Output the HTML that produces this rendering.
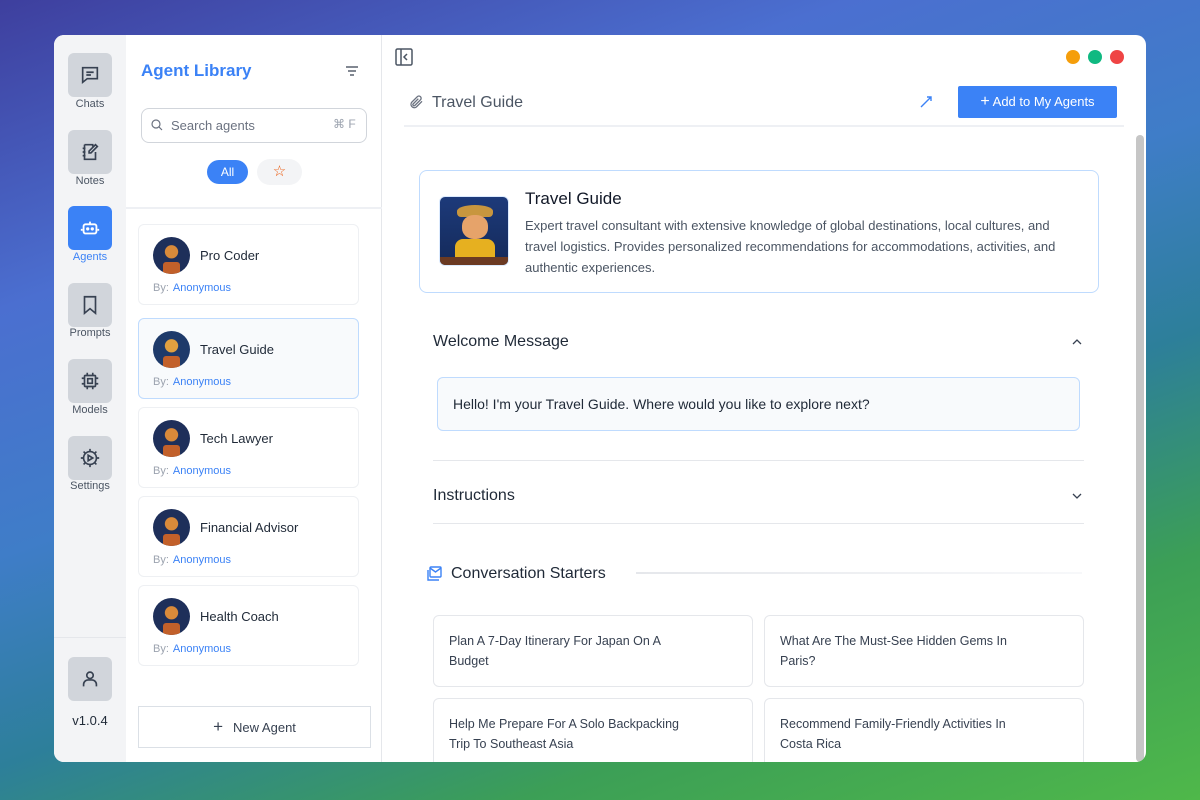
<!DOCTYPE html>
<html><head><meta charset="utf-8"><style>
*{box-sizing:border-box;margin:0;padding:0}
body{width:1200px;height:800px;overflow:hidden;font-family:"Liberation Sans",sans-serif;position:relative;
background:linear-gradient(160deg,#3e3f9e 0%,#4b6fd0 25%,#3f7dc8 45%,#2d7f9a 62%,#3c9f56 80%,#4fb84a 100%)}
.win{position:absolute;left:54px;top:35px;width:1092px;height:727px;background:#fff;border-radius:10px;overflow:hidden}
.rail{position:absolute;left:0;top:0;width:72px;height:727px;background:#f3f4f6}
.rb{position:absolute;left:14px;width:44px;height:44px;border-radius:6px;background:#d1d5db;display:flex;align-items:center;justify-content:center}
.rb.act{background:#3b82f6}
.rl{position:absolute;left:0;width:72px;text-align:center;font-size:11px;color:#4b5563}
.lib{position:absolute;left:72px;top:0;width:256px;height:727px;background:#fff;border-right:1px solid #e5e7eb}
.abs{position:absolute}
.card{position:absolute;left:12px;width:221px;height:81px;border:1px solid #eef0f3;border-radius:6px;background:#fff}
.card.sel{background:#f8fafc;border:1px solid #bfdbfe}
.av{position:absolute;left:14px;top:12px;width:37px;height:37px;border-radius:50%;background:radial-gradient(circle at 50% 40%,#d98a3a 0 22%,#1e2f5a 24% 100%);overflow:hidden}
.av:after{content:"";position:absolute;left:10px;bottom:0;width:17px;height:12px;background:#c2602a;border-radius:3px 3px 0 0}
.nm{position:absolute;left:61px;top:23px;font-size:13px;color:#1f2937}
.by{position:absolute;left:14px;top:57px;font-size:11px;color:#9ca3af}
.by b{color:#3b82f6;font-weight:normal;margin-left:4px}
.main{position:absolute;left:328px;top:0;width:764px;height:727px}
.st{position:absolute;width:320px;height:72px;border:1px solid #e5e7eb;border-radius:6px;padding:15px 60px 15px 15px;font-size:12.5px;line-height:20px;color:#374151}
</style></head><body>
<div class="win">
 <div class="rail">
  <div class="rb" style="top:18px"><svg width="22" height="22" viewBox="0 0 24 24" fill="none" stroke="#374151" stroke-width="1.8"><path d="M4 4h16v12H9l-5 4z"/><path d="M8 9h8M8 12h5"/></svg></div>
  <div class="rl" style="top:63px">Chats</div>
  <div class="rb" style="top:95px"><svg width="22" height="22" viewBox="0 0 24 24" fill="none" stroke="#374151" stroke-width="1.8"><path d="M6 4h9v2M6 4v16h12v-8"/><path d="M4 8h3M4 12h3M4 16h3"/><path d="M18 4l2 2-7 7h-2v-2z"/></svg></div>
  <div class="rl" style="top:140px">Notes</div>
  <div class="rb act" style="top:171px"><svg width="22" height="22" viewBox="0 0 24 24" fill="none" stroke="#fff" stroke-width="2"><rect x="5" y="8" width="14" height="10" rx="2"/><path d="M12 8V5M3 13v2M21 13v2"/><circle cx="9.5" cy="13" r=".8" fill="#fff"/><circle cx="14.5" cy="13" r=".8" fill="#fff"/></svg></div>
  <div class="rl" style="top:216px;color:#3b82f6">Agents</div>
  <div class="rb" style="top:248px"><svg width="22" height="22" viewBox="0 0 24 24" fill="none" stroke="#374151" stroke-width="1.8"><path d="M6 3h12v18l-6-5-6 5z"/></svg></div>
  <div class="rl" style="top:292px">Prompts</div>
  <div class="rb" style="top:324px"><svg width="22" height="22" viewBox="0 0 24 24" fill="none" stroke="#374151" stroke-width="1.8"><rect x="6" y="6" width="12" height="12" rx="1"/><rect x="9.5" y="9.5" width="5" height="5"/><path d="M9 3v3M15 3v3M9 18v3M15 18v3M3 9h3M3 15h3M18 9h3M18 15h3"/></svg></div>
  <div class="rl" style="top:369px">Models</div>
  <div class="rb" style="top:401px"><svg width="22" height="22" viewBox="0 0 24 24" fill="none" stroke="#374151" stroke-width="1.8"><circle cx="12" cy="12" r="7"/><path d="M12 2v3M12 19v3M2 12h3M19 12h3M5 5l2 2M17 17l2 2M5 19l2-2M17 7l2-2"/><path d="M10 9l5 3-5 3z"/></svg></div>
  <div class="rl" style="top:445px">Settings</div>
  <div class="abs" style="left:0;top:602px;width:72px;border-top:1px solid #e5e7eb"></div>
  <div class="rb" style="top:622px"><svg width="22" height="22" viewBox="0 0 24 24" fill="none" stroke="#374151" stroke-width="1.8"><circle cx="12" cy="8" r="3.5"/><path d="M5 20v-2a5 5 0 0 1 5-5h4a5 5 0 0 1 5 5v2"/></svg></div>
  <div class="rl" style="top:678px;font-size:13px;color:#1f2937">v1.0.4</div>
 </div>
 <div class="lib">
  <div class="abs" style="left:15px;top:26px;font-size:17px;font-weight:bold;color:#3b82f6">Agent Library</div>
  <svg class="abs" style="left:219px;top:29px" width="14" height="14" viewBox="0 0 14 14" stroke="#374151" stroke-width="1.3"><path d="M1 3h12M3 7h8M5 11h4"/></svg>
  <div class="abs" style="left:15px;top:73px;width:226px;height:35px;border:1px solid #d1d5db;border-radius:8px"></div>
  <svg class="abs" style="left:25px;top:84px" width="12" height="12" viewBox="0 0 12 12" fill="none" stroke="#6b7280" stroke-width="1.2"><circle cx="5" cy="5" r="4"/><path d="M8 8l3 3"/></svg>
  <div class="abs" style="left:45px;top:83px;font-size:13px;color:#6b7280">Search agents</div>
  <div class="abs" style="left:207px;top:82px;font-size:12px;color:#9ca3af">⌘ F</div>
  <div class="abs" style="left:81px;top:125px;width:41px;height:24px;border-radius:12px;background:#3b82f6;color:#fff;font-size:12px;text-align:center;line-height:24px">All</div>
  <div class="abs" style="left:131px;top:124px;width:45px;height:26px;border-radius:13px;background:#f3f4f6;text-align:center;line-height:26px;color:#ea580c;font-size:15px">☆</div>
  <div class="abs" style="left:0;top:172px;width:256px;border-top:2px solid #eef0f4"></div>
  <div class="card" style="top:189px"><div class="av"></div><div class="nm">Pro Coder</div><div class="by">By:<b>Anonymous</b></div></div>
  <div class="card sel" style="top:283px"><div class="av" style="background:radial-gradient(circle at 50% 40%,#e0a040 0 22%,#1e3a6a 24% 100%)"></div><div class="nm">Travel Guide</div><div class="by">By:<b>Anonymous</b></div></div>
  <div class="card" style="top:372px"><div class="av"></div><div class="nm">Tech Lawyer</div><div class="by">By:<b>Anonymous</b></div></div>
  <div class="card" style="top:461px"><div class="av"></div><div class="nm">Financial Advisor</div><div class="by">By:<b>Anonymous</b></div></div>
  <div class="card" style="top:550px"><div class="av"></div><div class="nm">Health Coach</div><div class="by">By:<b>Anonymous</b></div></div>
  <div class="abs" style="left:12px;top:671px;width:233px;height:42px;border:1px solid #dbe0e6;text-align:center;line-height:40px;font-size:13px;color:#374151"><span style="font-size:17px;margin-right:10px">+</span>New Agent</div>
 </div>
 <div class="main">
  <svg class="abs" style="left:13px;top:13px" width="18" height="18" viewBox="0 0 18 18" fill="none" stroke="#4b5563" stroke-width="1.5"><rect x="1" y="1" width="16" height="16" rx="1.5"/><path d="M6 1v16M12 6l-3 3 3 3"/></svg>
  <div class="abs" style="left:684px;top:15px;width:14px;height:14px;border-radius:50%;background:#f59e0b"></div>
  <div class="abs" style="left:706px;top:15px;width:14px;height:14px;border-radius:50%;background:#10b981"></div>
  <div class="abs" style="left:728px;top:15px;width:14px;height:14px;border-radius:50%;background:#ef4444"></div>
  <svg class="abs" style="left:26px;top:59px" width="16" height="16" viewBox="0 0 24 24" fill="none" stroke="#6b7280" stroke-width="2"><path d="M21 11l-8.5 8.5a5 5 0 0 1-7-7L14 4a3.3 3.3 0 0 1 4.7 4.7l-8.5 8.5a1.7 1.7 0 0 1-2.4-2.4L15.5 7"/></svg>
  <div class="abs" style="left:50px;top:59px;font-size:16px;color:#4b5563">Travel Guide</div>
  <svg class="abs" style="left:537px;top:60px" width="14" height="14" viewBox="0 0 14 14" fill="none" stroke="#3b82f6" stroke-width="1.4"><path d="M2 12L12 2M8 2h4v4"/></svg>
  <div class="abs" style="left:576px;top:51px;width:159px;height:32px;background:#3b82f6;border-radius:2px;color:#fff;font-size:13px;text-align:center;line-height:32px"><span style="font-size:16px">+</span> Add to My Agents</div>
  <div class="abs" style="left:22px;top:90px;width:720px;border-top:2px solid #eef0f4"></div>
  <div class="abs" style="left:754px;top:100px;width:8px;height:627px;background:#c6c6c6;border-radius:4px"></div>
  <div class="abs" style="left:37px;top:135px;width:680px;height:123px;border:1px solid #bfdbfe;border-radius:8px"></div>
  <div class="abs" style="left:57px;top:161px;width:70px;height:70px;border-radius:6px;background:linear-gradient(#1d3a7a,#142a5a);border:1px solid #dbeafe;overflow:hidden">
   <div class="abs" style="left:17px;top:8px;width:36px;height:12px;background:#c8963e;border-radius:50% 50% 4px 4px"></div>
   <div class="abs" style="left:22px;top:18px;width:26px;height:24px;background:#e6a36a;border-radius:45%"></div>
   <div class="abs" style="left:15px;top:42px;width:40px;height:20px;background:#e6b020;border-radius:8px 8px 0 0"></div>
   <div class="abs" style="left:0;top:60px;width:70px;height:10px;background:#6b3a22"></div>
  </div>
  <div class="abs" style="left:143px;top:154px;font-size:17px;color:#111827">Travel Guide</div>
  <div class="abs" style="left:143px;top:180px;width:560px;font-size:13px;line-height:21px;color:#4b5563">Expert travel consultant with extensive knowledge of global destinations, local cultures, and travel logistics. Provides personalized recommendations for accommodations, activities, and authentic experiences.</div>
  <div class="abs" style="left:51px;top:298px;font-size:16px;color:#1f2937">Welcome Message</div>
  <svg class="abs" style="left:690px;top:303px" width="10" height="8" viewBox="0 0 10 8" fill="none" stroke="#374151" stroke-width="1.3"><path d="M1 6l4-4 4 4"/></svg>
  <div class="abs" style="left:55px;top:342px;width:643px;height:54px;background:#f8fafc;border:1px solid #bfdbfe;border-radius:6px;padding:0 15px;line-height:52px;font-size:14px;color:#1f2937">Hello! I'm your Travel Guide. Where would you like to explore next?</div>
  <div class="abs" style="left:51px;top:425px;width:651px;border-top:1px solid #e5e7eb"></div>
  <div class="abs" style="left:51px;top:452px;font-size:16px;color:#1f2937">Instructions</div>
  <svg class="abs" style="left:690px;top:457px" width="10" height="8" viewBox="0 0 10 8" fill="none" stroke="#374151" stroke-width="1.3"><path d="M1 2l4 4 4-4"/></svg>
  <div class="abs" style="left:51px;top:488px;width:651px;border-top:1px solid #e5e7eb"></div>
  <svg class="abs" style="left:44px;top:530px" width="17" height="17" viewBox="0 0 17 17" fill="none" stroke="#3b82f6" stroke-width="1.4"><rect x="4" y="2" width="11" height="10" rx="1"/><path d="M4 3l5.5 4L15 3"/><path d="M2 5v10h11"/></svg>
  <div class="abs" style="left:69px;top:530px;font-size:16px;color:#1f2937">Conversation Starters</div>
  <div class="abs" style="left:254px;top:537px;width:446px;height:2px;background:linear-gradient(90deg,#e5e7eb,#f7f8fa)"></div>
  <div class="st" style="left:51px;top:580px">Plan A 7-Day Itinerary For Japan On A Budget</div>
  <div class="st" style="left:382px;top:580px">What Are The Must-See Hidden Gems In Paris?</div>
  <div class="st" style="left:51px;top:663px">Help Me Prepare For A Solo Backpacking Trip To Southeast Asia</div>
  <div class="st" style="left:382px;top:663px">Recommend Family-Friendly Activities In Costa Rica</div>
 </div>
</div>
</body></html>
